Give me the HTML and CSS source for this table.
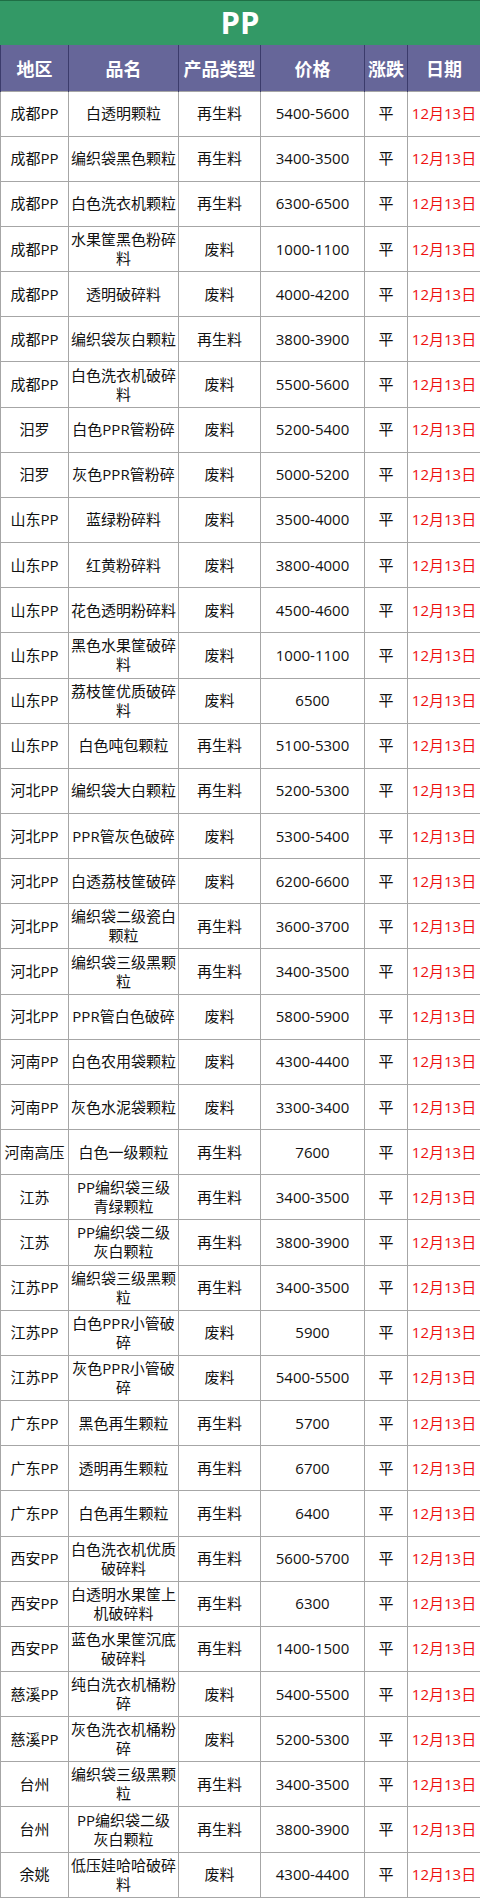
FILE: index.html
```html
<!DOCTYPE html>
<html lang="zh">
<head>
<meta charset="utf-8">
<title>PP</title>
<link rel="stylesheet" href="styles.css">
</head>
<body>
<div class="sheet">
  <div class="title">PP</div>
  <table class="grid">
    <colgroup>
      <col class="c1"><col class="c2"><col class="c3"><col class="c4"><col class="c5"><col class="c6">
    </colgroup>
    <thead>
      <tr><th>地区</th><th>品名</th><th>产品类型</th><th>价格</th><th>涨跌</th><th>日期</th></tr>
    </thead>
    <tbody id="rows">
      <tr><td>成都PP</td><td>白透明颗粒</td><td>再生料</td><td>5400-5600</td><td>平</td><td class="date">12月13日</td></tr>
      <tr><td>成都PP</td><td>编织袋黑色颗粒</td><td>再生料</td><td>3400-3500</td><td>平</td><td class="date">12月13日</td></tr>
      <tr><td>成都PP</td><td>白色洗衣机颗粒</td><td>再生料</td><td>6300-6500</td><td>平</td><td class="date">12月13日</td></tr>
      <tr><td>成都PP</td><td>水果筐黑色粉碎料</td><td>废料</td><td>1000-1100</td><td>平</td><td class="date">12月13日</td></tr>
      <tr><td>成都PP</td><td>透明破碎料</td><td>废料</td><td>4000-4200</td><td>平</td><td class="date">12月13日</td></tr>
      <tr><td>成都PP</td><td>编织袋灰白颗粒</td><td>再生料</td><td>3800-3900</td><td>平</td><td class="date">12月13日</td></tr>
      <tr><td>成都PP</td><td>白色洗衣机破碎料</td><td>废料</td><td>5500-5600</td><td>平</td><td class="date">12月13日</td></tr>
      <tr><td>汨罗</td><td>白色PPR管粉碎</td><td>废料</td><td>5200-5400</td><td>平</td><td class="date">12月13日</td></tr>
      <tr><td>汨罗</td><td>灰色PPR管粉碎</td><td>废料</td><td>5000-5200</td><td>平</td><td class="date">12月13日</td></tr>
      <tr><td>山东PP</td><td>蓝绿粉碎料</td><td>废料</td><td>3500-4000</td><td>平</td><td class="date">12月13日</td></tr>
      <tr><td>山东PP</td><td>红黄粉碎料</td><td>废料</td><td>3800-4000</td><td>平</td><td class="date">12月13日</td></tr>
      <tr><td>山东PP</td><td>花色透明粉碎料</td><td>废料</td><td>4500-4600</td><td>平</td><td class="date">12月13日</td></tr>
      <tr><td>山东PP</td><td>黑色水果筐破碎料</td><td>废料</td><td>1000-1100</td><td>平</td><td class="date">12月13日</td></tr>
      <tr><td>山东PP</td><td>荔枝筐优质破碎料</td><td>废料</td><td>6500</td><td>平</td><td class="date">12月13日</td></tr>
      <tr><td>山东PP</td><td>白色吨包颗粒</td><td>再生料</td><td>5100-5300</td><td>平</td><td class="date">12月13日</td></tr>
      <tr><td>河北PP</td><td>编织袋大白颗粒</td><td>再生料</td><td>5200-5300</td><td>平</td><td class="date">12月13日</td></tr>
      <tr><td>河北PP</td><td>PPR管灰色破碎</td><td>废料</td><td>5300-5400</td><td>平</td><td class="date">12月13日</td></tr>
      <tr><td>河北PP</td><td>白透荔枝筐破碎</td><td>废料</td><td>6200-6600</td><td>平</td><td class="date">12月13日</td></tr>
      <tr><td>河北PP</td><td>编织袋二级瓷白颗粒</td><td>再生料</td><td>3600-3700</td><td>平</td><td class="date">12月13日</td></tr>
      <tr><td>河北PP</td><td>编织袋三级黑颗粒</td><td>再生料</td><td>3400-3500</td><td>平</td><td class="date">12月13日</td></tr>
      <tr><td>河北PP</td><td>PPR管白色破碎</td><td>废料</td><td>5800-5900</td><td>平</td><td class="date">12月13日</td></tr>
      <tr><td>河南PP</td><td>白色农用袋颗粒</td><td>废料</td><td>4300-4400</td><td>平</td><td class="date">12月13日</td></tr>
      <tr><td>河南PP</td><td>灰色水泥袋颗粒</td><td>废料</td><td>3300-3400</td><td>平</td><td class="date">12月13日</td></tr>
      <tr><td>河南高压</td><td>白色一级颗粒</td><td>再生料</td><td>7600</td><td>平</td><td class="date">12月13日</td></tr>
      <tr><td>江苏</td><td>PP编织袋三级青绿颗粒</td><td>再生料</td><td>3400-3500</td><td>平</td><td class="date">12月13日</td></tr>
      <tr><td>江苏</td><td>PP编织袋二级灰白颗粒</td><td>再生料</td><td>3800-3900</td><td>平</td><td class="date">12月13日</td></tr>
      <tr><td>江苏PP</td><td>编织袋三级黑颗粒</td><td>再生料</td><td>3400-3500</td><td>平</td><td class="date">12月13日</td></tr>
      <tr><td>江苏PP</td><td>白色PPR小管破碎</td><td>废料</td><td>5900</td><td>平</td><td class="date">12月13日</td></tr>
      <tr><td>江苏PP</td><td>灰色PPR小管破碎</td><td>废料</td><td>5400-5500</td><td>平</td><td class="date">12月13日</td></tr>
      <tr><td>广东PP</td><td>黑色再生颗粒</td><td>再生料</td><td>5700</td><td>平</td><td class="date">12月13日</td></tr>
      <tr><td>广东PP</td><td>透明再生颗粒</td><td>再生料</td><td>6700</td><td>平</td><td class="date">12月13日</td></tr>
      <tr><td>广东PP</td><td>白色再生颗粒</td><td>再生料</td><td>6400</td><td>平</td><td class="date">12月13日</td></tr>
      <tr><td>西安PP</td><td>白色洗衣机优质破碎料</td><td>再生料</td><td>5600-5700</td><td>平</td><td class="date">12月13日</td></tr>
      <tr><td>西安PP</td><td>白透明水果筐上机破碎料</td><td>再生料</td><td>6300</td><td>平</td><td class="date">12月13日</td></tr>
      <tr><td>西安PP</td><td>蓝色水果筐沉底破碎料</td><td>再生料</td><td>1400-1500</td><td>平</td><td class="date">12月13日</td></tr>
      <tr><td>慈溪PP</td><td>纯白洗衣机桶粉碎</td><td>废料</td><td>5400-5500</td><td>平</td><td class="date">12月13日</td></tr>
      <tr><td>慈溪PP</td><td>灰色洗衣机桶粉碎</td><td>废料</td><td>5200-5300</td><td>平</td><td class="date">12月13日</td></tr>
      <tr><td>台州</td><td>编织袋三级黑颗粒</td><td>再生料</td><td>3400-3500</td><td>平</td><td class="date">12月13日</td></tr>
      <tr><td>台州</td><td>PP编织袋二级灰白颗粒</td><td>再生料</td><td>3800-3900</td><td>平</td><td class="date">12月13日</td></tr>
      <tr><td>余姚</td><td>低压娃哈哈破碎料</td><td>废料</td><td>4300-4400</td><td>平</td><td class="date">12月13日</td></tr>
    </tbody>
  </table>
</div>
</body>
</html>
```

FILE: styles.css
```css
html, body {
  margin: 0;
  padding: 0;
  background: #ffffff;
}

body {
  font-family: "Open Sans", "Noto Sans CJK SC", sans-serif;
  color: #111111;
}

.sheet {
  width: 480px;
}

.title {
  height: 45px;
  box-sizing: border-box;
  background: #339966;
  border-top: 1px solid #1f6e45;
  color: #ffffff;
  font-family: "Open Sans", "Noto Sans CJK SC", sans-serif;
  font-weight: 700;
  font-size: 31px;
  line-height: 43px;
  text-align: center;
}

.grid {
  width: 480px;
  border-collapse: collapse;
  table-layout: fixed;
}

.c1 { width: 68px; }
.c2 { width: 110px; }
.c3 { width: 82px; }
.c4 { width: 104px; }
.c5 { width: 43px; }
.c6 { width: 73px; }

.grid th {
  height: 45.5px;
  padding: 0;
  background: #666699;
  color: #ffffff;
  font-family: "Noto Sans CJK SC", sans-serif;
  font-weight: 700;
  font-size: 18px;
  border-left: 1px solid #3b3b6b;
  border-right: 1px solid #3b3b6b;
  text-align: center;
  vertical-align: middle;
}

.grid td {
  height: 45.17px;
  padding: 0 2px;
  font-size: 15px;
  line-height: 19px;
  text-align: center;
  vertical-align: middle;
  border: 1px solid #a6a6a6;
  box-sizing: border-box;
  word-break: break-all;
}

.grid td.date {
  color: #ee1111;
}
```
